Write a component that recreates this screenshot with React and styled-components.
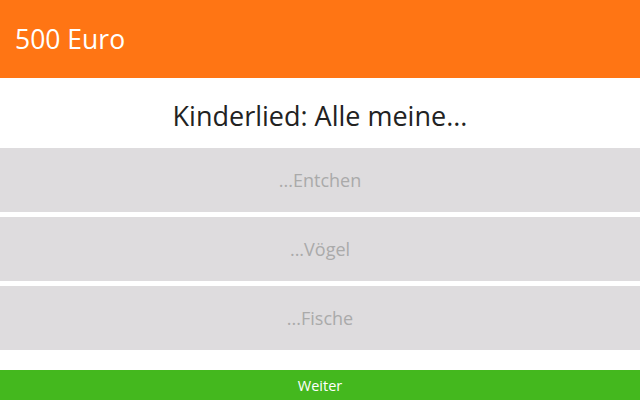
import React from 'react';
import styled, { createGlobalStyle } from 'styled-components';

const GlobalStyle = createGlobalStyle`
  html, body {
    margin: 0;
    padding: 0;
    background: #fff;
    font-family: "Open Sans", "Noto Sans", sans-serif;
  }
`;

const Page = styled.div`
  width: 640px;
  height: 400px;
  display: flex;
  flex-direction: column;
  overflow: hidden;
`;

const Header = styled.header`
  height: 78px;
  background-color: #ff7514;
  color: #fff;
  display: flex;
  align-items: center;
  padding: 0 15px;
  font-size: 26.5px;
`;

const Question = styled.h2`
  margin: 0;
  height: 70px;
  padding-top: 4px;
  box-sizing: border-box;
  display: flex;
  align-items: center;
  justify-content: center;
  font-size: 27px;
  font-weight: 400;
  color: #222;
`;

const Answers = styled.div`
  display: flex;
  flex-direction: column;
  gap: 5px;
`;

const Answer = styled.button`
  height: 64px;
  border: none;
  background-color: #dedcde;
  color: #aaa;
  font-family: inherit;
  font-size: 18px;
  cursor: pointer;
`;

const NextButton = styled.button`
  margin-top: auto;
  height: 30px;
  border: none;
  background-color: #44b81e;
  color: #fff;
  font-family: inherit;
  font-size: 14.5px;
  cursor: pointer;
`;

const answers = ['...Entchen', '...Vögel', '...Fische'];

const App = () => {
  return (
    <Page>
      <GlobalStyle />
      <Header>500 Euro</Header>
      <Question>Kinderlied: Alle meine...</Question>
      <Answers>
        {answers.map((a) => (
          <Answer key={a}>{a}</Answer>
        ))}
      </Answers>
      <NextButton>Weiter</NextButton>
    </Page>
  );
};

export default App;
